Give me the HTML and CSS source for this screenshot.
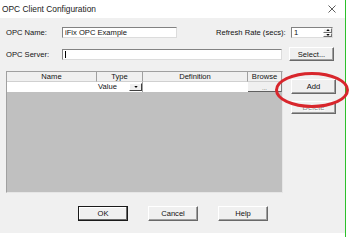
FILE: index.html
```html
<!DOCTYPE html>
<html>
<head>
<meta charset="utf-8">
<link rel="stylesheet" href="styles.css">
</head>
<body>
<div class="screen">
  <div class="window">
    <div class="titlebar">
      <span class="title">OPC Client Configuration</span>
      <svg class="close" width="8" height="8" viewBox="0 0 8 8"><path d="M0.5 0.5L7.5 7.5M7.5 0.5L0.5 7.5" stroke="#333" stroke-width="0.8" fill="none"/></svg>
    </div>
    <div class="client">
      <div class="row r1">
        <span class="lbl">OPC Name:</span>
        <div class="edit name">iFix OPC Example</div>
        <span class="lbl refresh">Refresh Rate (secs):</span>
        <div class="spin">
          <span class="val">1</span>
          <div class="arrows">
            <span class="arr"><svg width="5" height="3" viewBox="0 0 5 3"><path d="M0 3L2.5 0L5 3Z" fill="#000"/></svg></span>
            <span class="arr"><svg width="5" height="3" viewBox="0 0 5 3"><path d="M0 0L2.5 3L5 0Z" fill="#000"/></svg></span>
          </div>
        </div>
      </div>
      <div class="row r2">
        <span class="lbl">OPC Server:</span>
        <div class="edit server"><span class="caret"></span></div>
        <div class="btn select">Select...</div>
      </div>
      <div class="main">
        <div class="list">
          <div class="hdr">
            <span class="col c-name">Name</span>
            <span class="col c-type">Type</span>
            <span class="col c-def">Definition</span>
            <span class="col c-br">Browse</span>
          </div>
          <div class="datarow">
            <span class="cell c-name"></span>
            <span class="cell c-type"><span class="tv">Value</span><span class="dd"><svg width="5" height="3" viewBox="0 0 5 3"><path d="M0 0L2.5 3L5 0Z" fill="#000"/></svg></span></span>
            <span class="cell c-def"></span>
            <span class="cell c-br"><span class="dots">...</span></span>
          </div>
          <div class="empty"></div>
        </div>
        <div class="side">
          <div class="btn add">Add</div>
          <div class="btn del">Delete</div>
        </div>
      </div>
      <div class="footer">
        <div class="btn def">OK</div>
        <div class="btn">Cancel</div>
        <div class="btn">Help</div>
      </div>
    </div>
  </div>
  <div class="gline"></div>
  <div class="ring"></div>
</div>
</body>
</html>
```

FILE: styles.css
```css
html, body {
  margin: 0;
  padding: 0;
  background: #ffffff;
}
body {
  width: 352px;
  height: 237px;
  overflow: hidden;
  font-family: "Liberation Sans", Arial, sans-serif;
  font-size: 7.6px;
  color: #111;
}
.screen {
  position: relative;
  display: flex;
  width: 352px;
  height: 237px;
}
.window {
  width: 345px;
  display: flex;
  flex-direction: column;
}
.gline {
  width: 1px;
  height: 237px;
  background: #2cc02c;
}
.titlebar {
  height: 18px;
  background: #ffffff;
  display: flex;
  align-items: center;
  justify-content: space-between;
  padding: 0 9px 0 2px;
  box-sizing: border-box;
}
.title {
  font-size: 8.4px;
  color: #1a1a1a;
}
.close {
  display: block;
}
.client {
  height: 215px;
  background: #f0f0f0;
  display: flex;
  flex-direction: column;
  padding: 9px 0 0 6px;
  box-sizing: border-box;
}
.row {
  display: flex;
  align-items: center;
}
.lbl {
  width: 56px;
  flex: none;
  white-space: nowrap;
}
.edit {
  height: 11px;
  background: #fff;
  border: 1px solid;
  border-color: #828282 #dcdcdc #dcdcdc #828282;
  box-sizing: border-box;
  line-height: 9px;
  padding-left: 2px;
  white-space: nowrap;
}
.name { width: 115px; }
.refresh {
  width: 75px;
  margin-left: 39px;
}
.spin {
  width: 42px;
  height: 11px;
  background: #fff;
  border: 1px solid;
  border-color: #828282 #dcdcdc #dcdcdc #828282;
  box-sizing: border-box;
  display: flex;
  justify-content: space-between;
}
.val {
  line-height: 9px;
  padding-left: 2px;
}
.arrows {
  width: 9px;
  display: flex;
  flex-direction: column;
}
.arr {
  flex: 1;
  background: #f0f0f0;
  border: 1px solid;
  border-color: #fff #707070 #707070 #fff;
  box-sizing: border-box;
  display: flex;
  align-items: center;
  justify-content: center;
}
.arr svg { display: block; width: 4px; height: 2px; }
.r2 { margin-top: 9px; }
.server { width: 220px; }
.caret {
  display: inline-block;
  width: 1px;
  height: 7px;
  background: #000;
  vertical-align: middle;
}
.btn {
  height: 15px;
  background: #f0f0f0;
  border: 1px solid;
  border-color: #ffffff #696969 #696969 #ffffff;
  box-shadow: inset -1px -1px 0 #a0a0a0;
  box-sizing: border-box;
  display: flex;
  align-items: center;
  justify-content: center;
  white-space: nowrap;
}
.select {
  width: 45px;
  margin-left: 7px;
  height: 14px;
}
.main {
  display: flex;
  margin-top: 10px;
}
.list {
  width: 277px;
  height: 122px;
  border: 1px solid;
  border-color: #a0a0a0 #e6e6e6 #e6e6e6 #a0a0a0;
  box-sizing: border-box;
  display: flex;
  flex-direction: column;
  background: #c0c0c0;
}
.hdr, .datarow {
  display: flex;
  height: 10px;
  flex: none;
}
.hdr {
  background: #f0f0f0;
}
.col, .cell {
  box-sizing: border-box;
  height: 10px;
  line-height: 10px;
  text-align: center;
}
.col {
  border-right: 1px solid #a0a0a0;
  border-bottom: 1px solid #d0d0d0;
  line-height: 9px;
}
.c-name { width: 90px; }
.c-type { width: 46px; }
.c-def { width: 105px; }
.c-br { width: 34px; }
.datarow { background: #fff; }
.cell.c-type {
  display: flex;
  align-items: center;
  justify-content: space-between;
  text-align: left;
  padding-left: 1px;
  border-right: 1px solid #a0a0a0;
}
.dd {
  width: 13px;
  height: 8px;
  background: #f0f0f0;
  border: 1px solid;
  border-color: #fff #404040 #404040 #fff;
  box-sizing: border-box;
  display: flex;
  align-items: center;
  justify-content: center;
}
.dd svg { display: block; width: 4px; height: 2px; }
.cell.c-br {
  background: #f0f0f0;
  border-bottom: 1px solid #606060;
  border-right: 1px solid #808080;
}
.dots {
  font-size: 6px;
  line-height: 12px;
  color: #555;
}
.empty {
  flex: 1;
  background: #c0c0c0;
}
.side {
  display: flex;
  flex-direction: column;
  margin-left: 8px;
  padding-top: 8px;
  gap: 7px;
}
.side .btn { width: 45px; }
.add { height: 15px; }
.del {
  height: 13px;
  color: #8c8c8c;
  text-shadow: 1px 1px 0 #ffffff;
}
.footer {
  display: flex;
  margin-top: 13px;
  padding-left: 72px;
  gap: 20px;
}
.footer .btn { width: 50px; }
.footer .def {
  border: 1px solid #1a1a1a;
  box-shadow: inset -1px -1px 0 #696969, inset 1px 1px 0 #ffffff;
}
.ring {
  position: absolute;
  left: 275px;
  top: 72px;
  width: 74px;
  height: 36px;
  border: 3px solid #d8262c;
  border-radius: 50%;
  box-sizing: border-box;
}
```
